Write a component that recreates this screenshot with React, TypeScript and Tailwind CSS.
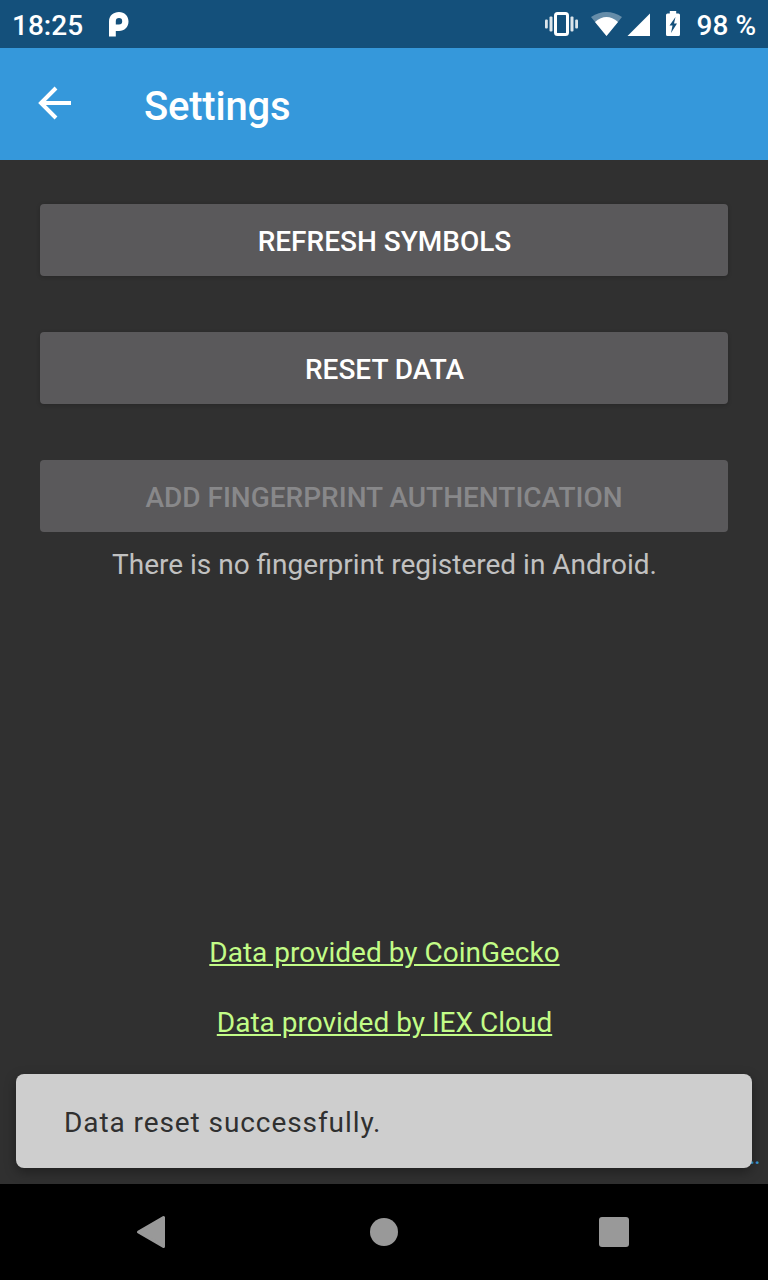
import React from "react";

function Button({ label, disabled = false }: { label: string; disabled?: boolean }) {
  return (
    <button
      disabled={disabled}
      className={
        disabled
          ? "h-[72px] w-full rounded bg-[#5a595b] pt-1 text-[28px] font-medium text-[#88888a]"
          : "h-[72px] w-full rounded bg-[#5a595b] pl-px pt-1 text-[28px] font-medium text-white shadow-[0_1px_4px_rgba(0,0,0,0.2)]"
      }
    >
      {label}
    </button>
  );
}

export default function App() {
  return (
    <div className="flex h-[1280px] w-[768px] flex-col overflow-hidden bg-[#303030] font-['Roboto',sans-serif]">
      <header className="flex h-12 shrink-0 items-center bg-[#14507b] text-[28px] font-medium text-white">
        <span className="ml-3 mt-1 w-[71px] leading-none">18:25</span>
        <svg className="ml-[26px]" width="22" height="26" viewBox="0 0 22 26">
          <path fill="white" fillRule="evenodd" d="M0 25.500V10.500C0 4.500 4.500 1 10 1s9.500 4 9.500 9.500S15.500 20 10 20H6.800v5.500zM6.800 13.500H10A3.200 3.200 0 1 0 6.800 10.300z" />
        </svg>
        <svg className="ml-auto" width="34" height="26" viewBox="0 0 34 26">
          <g fill="white">
            <rect x="0" y="8.500" width="2.800" height="9" rx="1" fillOpacity=".85" />
            <rect x="4.500" y="5.500" width="3" height="15" rx="1" fillOpacity=".85" />
            <rect x="25.500" y="5.500" width="3" height="15" rx="1" fillOpacity=".85" />
            <rect x="30.200" y="8.500" width="2.800" height="9" rx="1" fillOpacity=".85" />
          </g>
          <rect x="10.500" y="2.500" width="12" height="21" rx="2" fill="none" stroke="white" strokeWidth="3" />
        </svg>
        <svg className="ml-3" width="32" height="26" viewBox="0 0 32 26">
          <path fill="white" fillOpacity=".35" d="M0 6Q15.500-4 31 6L15.500 25z" />
          <path fill="white" d="M4 11Q15.500 1 27 11L15.500 25z" />
        </svg>
        <svg className="ml-1" width="24" height="24" viewBox="0 0 24 24"><path fill="white" d="M23 1.500V24H.5z" /></svg>
        <svg className="ml-[15px]" width="15" height="26" viewBox="0 0 15 26">
          <path fillRule="evenodd" fill="white" d="M3.800 0h6.400v2.500h2.300q1.500 0 1.500 1.500v19.500q0 1.500-1.500 1.500h-11Q0 25 0 23.500V4q0-1.500 1.500-1.500h2.300zM9.500 6 3.500 14.500H6.500L5 22l6-9.500H8z" />
        </svg>
        <span className="ml-4 mr-3 mt-1 leading-none">98 %</span>
      </header>
      <div className="flex h-28 shrink-0 items-center bg-[#3598db] text-white">
        <svg className="mb-0.5 ml-[38px]" width="34" height="34" viewBox="0 0 34 34">
          <path fill="none" stroke="white" strokeWidth="4" d="M33 17H4M18 2 3 17l15 15" />
        </svg>
        <h1 className="ml-[72px] mt-1.5 text-[40px] font-medium tracking-[-0.2px]">Settings</h1>
      </div>
      <main className="flex flex-1 flex-col px-10 pt-11">
        <div className="flex flex-col gap-14">
          <Button label="REFRESH SYMBOLS" />
          <Button label="RESET DATA" />
          <Button label="ADD FINGERPRINT AUTHENTICATION" disabled />
        </div>
        <p className="mt-3 pl-px text-center text-[28px] text-[#c1c1c1]">There is no fingerprint registered in Android.</p>
        <div className="mt-auto flex flex-col items-center gap-7 pb-[30px] pl-px text-[28px] text-[#c2fc87]">
          <a className="underline">Data provided by CoinGecko</a>
          <a className="underline">Data provided by IEX Cloud</a>
        </div>
      </main>
      <div className="relative h-[110px] shrink-0 px-4">
        <span className="absolute bottom-[17px] right-2 text-[18px] font-bold leading-[18px] text-[#3598db]">...</span>
        <div className="relative flex h-[94px] items-center rounded-lg bg-[#cecece] pl-12 pt-1 text-[28px] tracking-[0.92px] text-[#303030] shadow-[0_4px_12px_rgba(0,0,0,0.35)]">
          Data reset successfully.
        </div>
      </div>
      <nav className="flex h-24 shrink-0 items-center bg-black">
        <svg className="ml-[136px]" width="30" height="34" viewBox="0 0 30 34"><path fill="#999" stroke="#999" strokeWidth="3" strokeLinejoin="round" d="M27.500 2.500v29L2.500 17z" /></svg>
        <div className="ml-[204px] size-7 rounded-full bg-[#999]" />
        <div className="ml-[201px] size-[30px] rounded-[3px] bg-[#999]" />
      </nav>
    </div>
  );
}
